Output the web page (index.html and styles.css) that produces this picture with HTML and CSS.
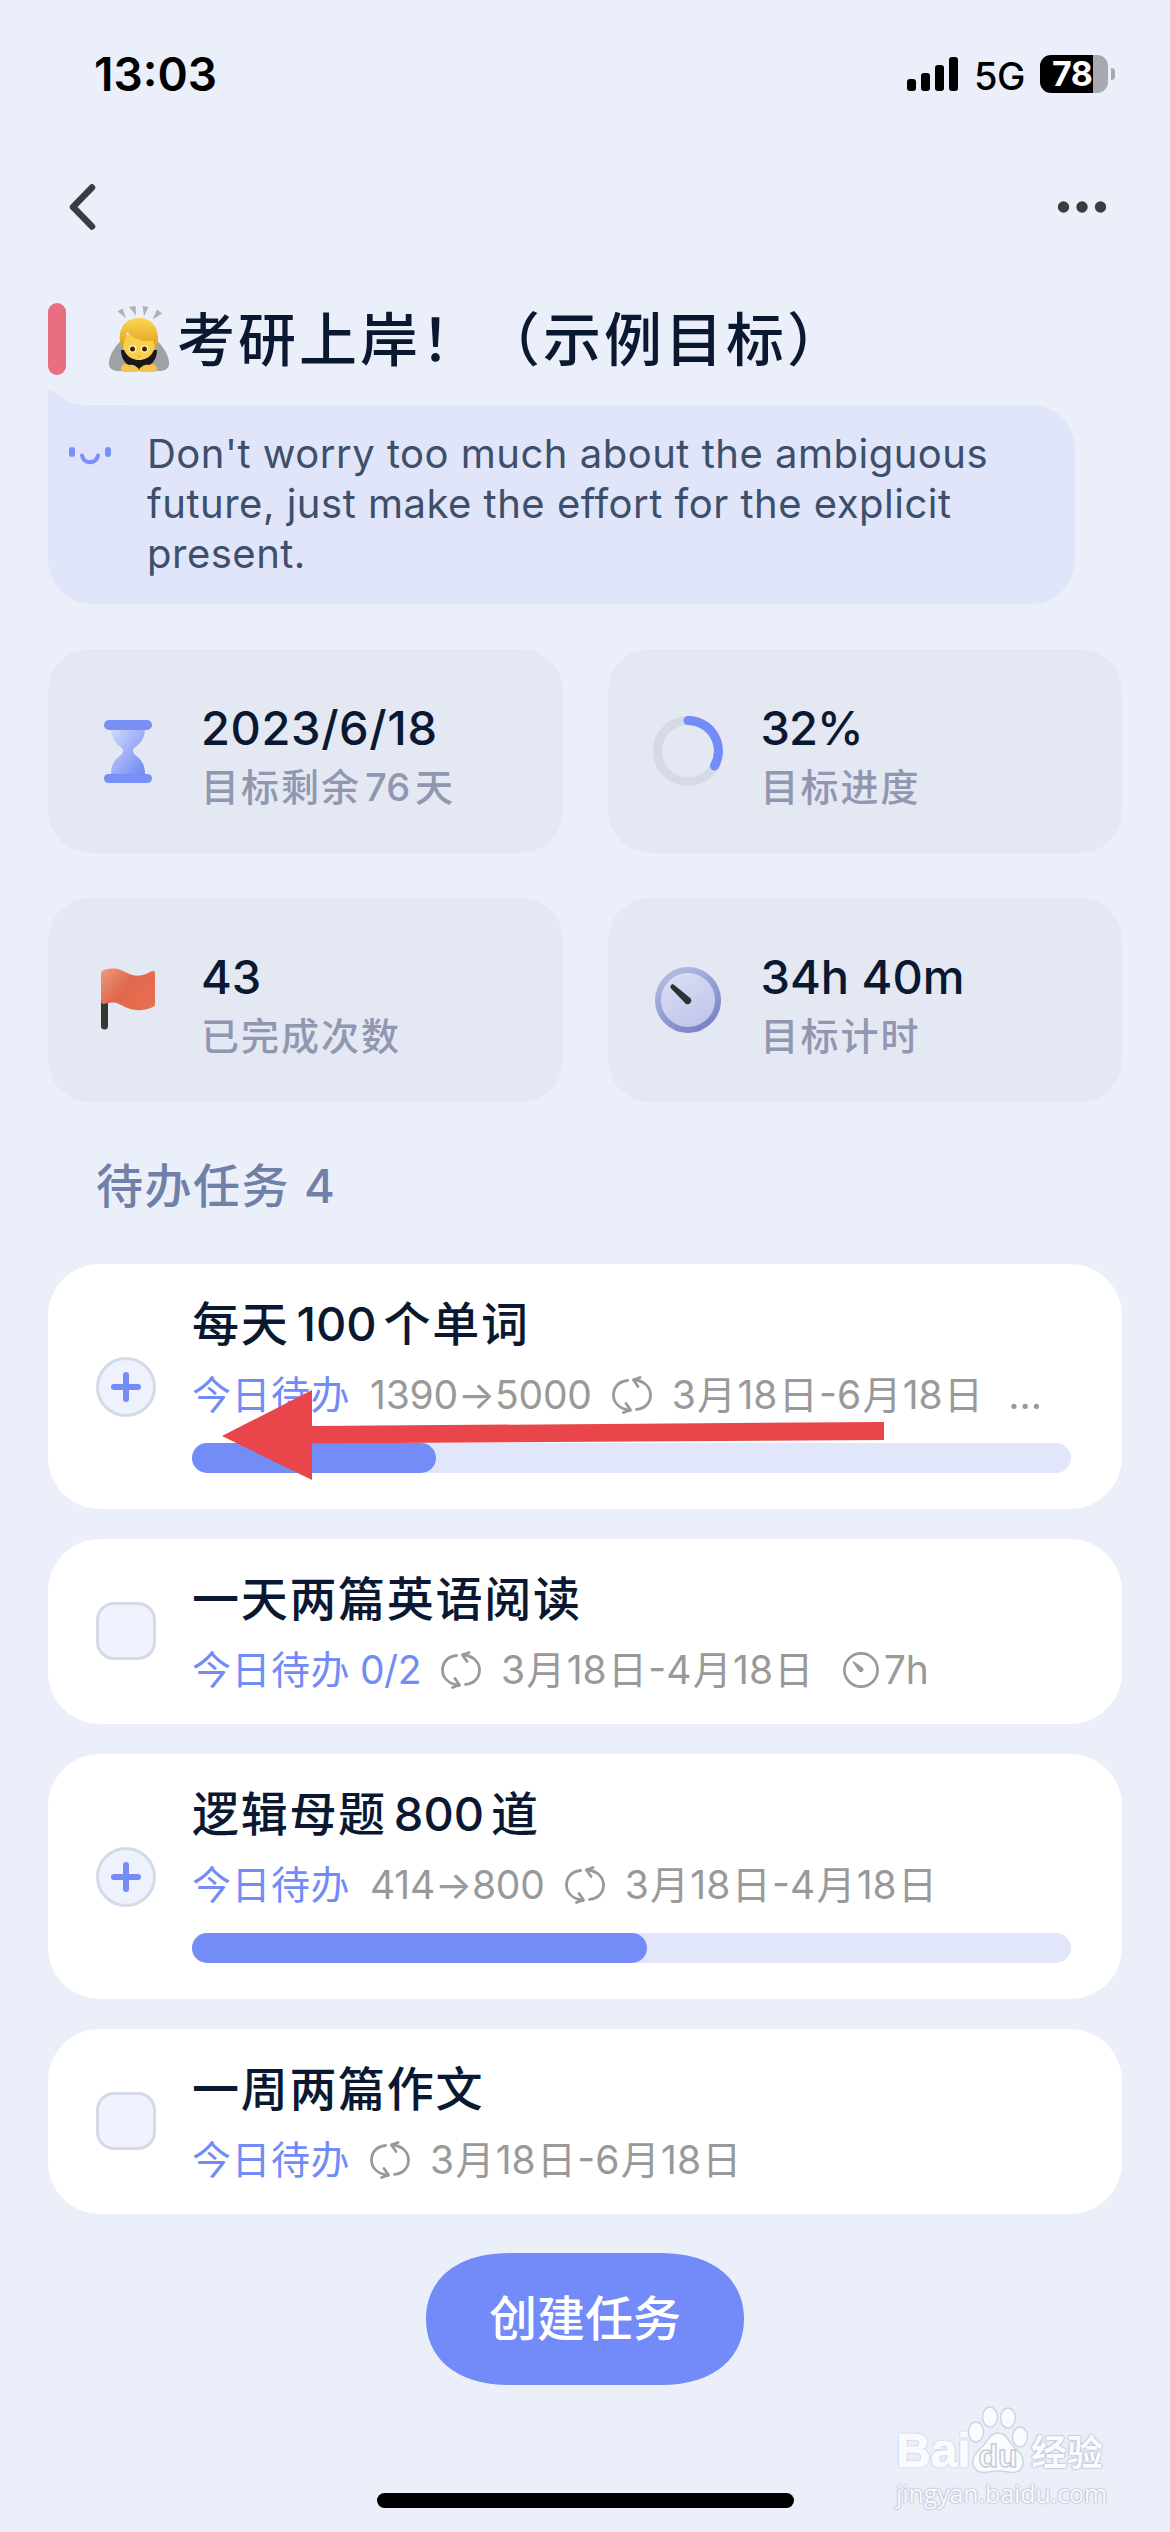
FILE: index.html
```html
<!DOCTYPE html>
<html lang="zh-CN">
<head>
<meta charset="utf-8">
<title>考研上岸</title>
<link rel="stylesheet" href="styles.css">
</head>
<body>
<svg width="0" height="0" class="defs">
  <defs>
    <linearGradient id="glass" x1="0" y1="0" x2="1" y2="1"><stop offset="0" stop-color="#d3dbfb"/><stop offset="1" stop-color="#6d87f5"/></linearGradient>
    <linearGradient id="flag" x1="0" y1="0" x2="1" y2=".7"><stop offset="0" stop-color="#ee9a7e"/><stop offset=".5" stop-color="#df694d"/><stop offset="1" stop-color="#e96d50"/></linearGradient>
    <linearGradient id="rim" x1=".2" y1="0" x2=".8" y2="1"><stop offset="0" stop-color="#b3bce2"/><stop offset="1" stop-color="#7881c2"/></linearGradient>
    <linearGradient id="face" x1=".2" y1="0" x2=".8" y2="1"><stop offset="0" stop-color="#dcdff5"/><stop offset="1" stop-color="#bec2e9"/></linearGradient>
    <linearGradient id="hair" x1="0" y1="0" x2="0" y2="1"><stop offset="0" stop-color="#fbd64e"/><stop offset="1" stop-color="#e0a021"/></linearGradient>
    <symbol id="repeat" viewBox="0 0 40 38"><g fill="none" stroke="#999" stroke-width="2.8" stroke-linecap="round" stroke-linejoin="round"><path d="M15.500 4.500C6 5.500 1.500 12 1.500 19c0 7 5 13.500 16.500 15.500M11.500 36.500l7-2.500-4.500-6.500"/><path d="M24.500 33.300C34 32.500 38.500 26 38.500 19c0-7-5-13.500-16.500-15.500M28 1.500l-6.500 2.500 4.500 6.500"/></g></symbol>
  </defs>
</svg>
<div class="screen">
  <header class="status">
    <span class="time">13:03</span>
    <div class="status-right">
      <svg class="signal" width="51" height="34" viewBox="0 0 51 34"><rect y="22" width="9" height="12" rx="3"/><rect x="14" y="16" width="9" height="18" rx="3"/><rect x="28" y="8" width="9" height="26" rx="3"/><rect x="42" width="9" height="34" rx="3"/></svg>
      <span class="net">5G</span>
      <div class="battery"><span>78</span></div>
      <i class="nub"></i>
    </div>
  </header>
  <nav class="nav">
    <svg width="30" height="48" viewBox="0 0 30 48"><path d="M25 4.500 6 24l19 19.500" fill="none" stroke="#3c3c3e" stroke-width="6.500" stroke-linecap="round" stroke-linejoin="round"/></svg>
    <svg width="50" height="12" viewBox="0 0 50 12" fill="#3c3c3e"><circle cx="6.500" cy="6" r="5.700"/><circle cx="25" cy="6" r="5.700"/><circle cx="43.500" cy="6" r="5.700"/></svg>
  </nav>
  <div class="title">
    <i class="mark"></i>
    <svg class="bow" width="62" height="68" viewBox="0 0 62 68">
      <g fill="#b0b0b2"><path d="M9.500 6.500l5-3 3.500 9.500zM21 2l6.500-1 .5 9.500zM34.500 1l6 1-4.500 9zM49 4.500l5 4-9.500 6z"/></g>
      <path d="M13 36C6 42 2 50 1 57c-1 7 5 9.500 12 9h36c7 .5 13-2 12-9-1-7-5-15-12-21z" fill="#a0a1a6"/>
      <path d="M13 45c0 9 5 17 18 20 13-3 18-11 18-20z" fill="#18181b"/>
      <path d="M14 30c-1 16 6 25 17 25s18-9 17-25z" fill="#fbcf4d"/>
      <path d="M12 36C10 22 19 13 31 13s20 9 19 23c0 4-1 6-3 7-1-3-1-5-2-7-11 1-21-3-26-9-1 6-2 8-3 11 0 2 0 3-1 4-2-1-3-3-3-6z" fill="url(#hair)"/>
      <circle cx="24.500" cy="44" r="3.800" fill="#fff3c4"/><circle cx="36.500" cy="44" r="3.800" fill="#fff3c4"/><circle cx="24.500" cy="44" r="2.500" fill="#3d2508"/><circle cx="36.500" cy="44" r="2.500" fill="#3d2508"/>
      <path d="M29.500 50.500h3l-1.500 2z" fill="#df9d26"/>
      <path d="M13 63c1-4 5-5 8-3 3-1 6 0 9 3 2 3 0 4-3 4H16c-2 0-3-2-3-4zM49 63c-1-4-5-5-8-3-3-1-6 0-9 3-2 3 0 4 3 4h11c2 0 3-2 3-4z" fill="#f5c24a"/>
    </svg>
    <h1>考研上岸！（示例目标）</h1>
  </div>
  <div class="bubble">
    <svg class="tail" width="40" height="40" viewBox="0 0 40 40"><path d="M0 40V3Q1-1 5 2L19 12Q26 16 34 16V40z" fill="#e1e5f9"/></svg>
    <div class="smile"><svg width="42" height="18" viewBox="0 0 42 18"><rect width="6" height="10" rx="3" fill="#7c90f5"/><rect x="36" width="6" height="10" rx="3" fill="#7c90f5"/><path d="M13 8.500c2 9 14 9 16 0" fill="none" stroke="#7c90f5" stroke-width="4" stroke-linecap="round"/></svg></div>
    <p>Don't worry too much about the ambiguous<br>future, just make the effort for the explicit<br>present.</p>
  </div>
  <section class="stats">
    <div class="stat"><svg width="70" height="70" viewBox="0 0 70 70"><path d="M18 12h34c0 12-6 16-11 20q-2 3 0 6c5 4 11 8 11 20H18c0-12 6-16 11-20q2-3 0-6c-5-4-11-8-11-20z" fill="url(#glass)"/><rect x="11" y="4" width="48" height="10" rx="5" fill="#788ff6"/><rect x="11" y="58" width="48" height="9" rx="4.500" fill="#788ff6"/></svg><div><b class="date">2023/6/18</b><small>目标剩余<em>76</em>天</small></div></div>
    <div class="stat"><svg width="70" height="70" viewBox="0 0 70 70"><circle cx="35" cy="35" r="30.500" fill="none" stroke="#d6dae5" stroke-width="9"/><path d="M35 4.500A30.500 30.500 0 0 1 61.500 50" fill="none" stroke="#738cf7" stroke-width="9" stroke-linecap="round"/></svg><div><b class="percent">32%</b><small>目标进度</small></div></div>
    <div class="stat"><svg width="70" height="70" viewBox="0 0 70 70"><path d="M11.500 36v25" stroke="#363634" stroke-width="7" stroke-linecap="round"/><path d="M8 8Q8 6 11 5C32-1 32 14 50 10c5-1 7-4 10-4q2 0 2 2v31q0 2-2 3c-16 7-26 1-34-3-5-3-11-1-15 0q-3 0-3-3z" fill="url(#flag)"/></svg><div><b>43</b><small>已完成次数</small></div></div>
    <div class="stat"><svg width="70" height="70" viewBox="0 0 70 70"><circle cx="35" cy="35" r="30" fill="url(#face)" stroke="url(#rim)" stroke-width="6"/><path d="M21.500 20.200 37.500 33.200A3.800 3.800 0 0 1 33 39L18 23.500A2.300 2.300 0 0 1 21.500 20.200z" fill="#293234"/></svg><div><b>34h 40m</b><small>目标计时</small></div></div>
  </section>
  <h2>待办任务 <em>4</em></h2>
  <section class="tasks">
    <article class="task tall">
      <svg class="check" width="60" height="60" viewBox="0 0 60 60"><circle cx="30" cy="30" r="28.500" fill="#eef2fd" stroke="#d5dae8" stroke-width="3"/><path d="M30 18v24M18 30h24" stroke="#738cf7" stroke-width="6" stroke-linecap="round"/></svg>
      <div class="body">
        <h3>每天<em>100</em>个单词</h3>
        <div class="meta"><span class="today">今日待办</span><span class="num">1390→5000</span><svg class="rep"><use href="#repeat"/></svg><span class="range">3<u>月</u>18<u>日</u>-6<u>月</u>18<u>日</u></span><span class="more">...</span></div>
        <div class="bar"><i style="width:27.8%"></i></div>
      </div>
      <svg class="arrow" width="664" height="92" viewBox="0 0 664 92"><path d="M0 47 90 1V37L662 33V51L90 54.500V91z" fill="#e9464b"/></svg>
    </article>
    <article class="task">
      <i class="box"></i>
      <div class="body">
        <h3>一天两篇英语阅读</h3>
        <div class="meta"><span class="today">今日待办<em>0/2</em></span><svg class="rep"><use href="#repeat"/></svg><span class="range">3<u>月</u>18<u>日</u>-4<u>月</u>18<u>日</u></span><svg class="clock" width="36" height="36" viewBox="0 0 36 36"><circle cx="18" cy="18" r="16.600" fill="none" stroke="#999" stroke-width="2.600"/><path d="M10.500 9 19.500 15.500A2.600 2.600 0 0 1 16 19.500L9.500 10z" fill="#999"/></svg><span class="hours">7h</span></div>
      </div>
    </article>
    <article class="task tall">
      <svg class="check" width="60" height="60" viewBox="0 0 60 60"><circle cx="30" cy="30" r="28.500" fill="#eef2fd" stroke="#d5dae8" stroke-width="3"/><path d="M30 18v24M18 30h24" stroke="#738cf7" stroke-width="6" stroke-linecap="round"/></svg>
      <div class="body">
        <h3>逻辑母题<em>800</em>道</h3>
        <div class="meta"><span class="today">今日待办</span><span class="num">414→800</span><svg class="rep"><use href="#repeat"/></svg><span class="range">3<u>月</u>18<u>日</u>-4<u>月</u>18<u>日</u></span></div>
        <div class="bar"><i style="width:51.75%"></i></div>
      </div>
    </article>
    <article class="task">
      <i class="box"></i>
      <div class="body">
        <h3>一周两篇作文</h3>
        <div class="meta"><span class="today">今日待办</span><svg class="rep"><use href="#repeat"/></svg><span class="range">3<u>月</u>18<u>日</u>-6<u>月</u>18<u>日</u></span></div>
      </div>
    </article>
  </section>
  <button class="create"><svg viewBox="0 0 318 132" width="318" height="132"><path d="M84 0H234C292 0 318 30 318 66S292 132 234 132H84C26 132 0 102 0 66S26 0 84 0z" fill="#728bf8"/></svg><span>创建任务</span></button>
  <div class="home"></div>
  <div class="watermark">
    <div class="logo"><span class="bai">Bai</span><svg width="64" height="70" viewBox="0 0 64 70"><g fill="#fafbfe" stroke="#d0d4df" stroke-width="1.500"><ellipse cx="9" cy="26" rx="7.500" ry="10"/><ellipse cx="23" cy="11" rx="7.500" ry="10"/><ellipse cx="41" cy="12" rx="7.500" ry="10"/><ellipse cx="53" cy="31" rx="7.500" ry="10"/><path d="M31 27c9 0 10 9 17 15 6 5 9 10 8 16-2 9-10 9-15 8q-10-2-20 0c-5 1-13 1-15-8-1-6 2-11 8-16 7-6 8-15 17-15z"/></g><text x="31" y="61" text-anchor="middle" class="du">du</text></svg><span class="jy">经验</span></div>
    <div class="url">jingyan.baidu.com</div>
  </div>
</div>
</body>
</html>
```
FILE: styles.css
```css
* { box-sizing: border-box; margin: 0; padding: 0; }
body { background: #ebeffa; font-family: Inter, "Noto Sans CJK SC", sans-serif; color: #0a1831; }
em, i { font-style: normal; }
u { text-decoration: none; margin: 0 1.300px; }
svg { display: block; flex: none; }
.defs { position: absolute; }
.screen { position: relative; width: 1170px; height: 2532px; overflow: hidden; display: flex; flex-direction: column; padding: 0 48px; }
.status { height: 148px; flex: none; display: flex; align-items: center; justify-content: space-between; padding: 0 7px 0 46px; color: #000; }
.time { font-size: 46px; font-weight: 600; }
.status-right { display: flex; align-items: center; }
.net { font-size: 38px; margin-left: 16px; width: 66px; font-weight: 500; line-height: 40px; padding-top: 3px; letter-spacing: -.5px; }
.battery { width: 68px; height: 38px; border-radius: 11px; background: linear-gradient(90deg, #000 53px, #a6a9b2 53px); color: #fff; font-size: 34px; font-weight: 700; line-height: 38px; padding-left: 12px; letter-spacing: -.5px; }
.nub { width: 4px; height: 12px; border-radius: 0 4px 4px 0; background: #a6a9b2; margin-left: 3px; }
.nav { height: 117px; flex: none; display: flex; align-items: center; justify-content: space-between; padding: 0 15px 0 19px; }
.title { height: 140px; flex: none; display: flex; align-items: center; padding-top: 8px; }
.mark { width: 18px; height: 72px; border-radius: 9px; background: #e86e80; }
.bow { margin-left: 42px; }
h1 { margin: 2px 0 0 7px; font-size: 58px; font-weight: 500; letter-spacing: 3px; line-height: 80px; white-space: nowrap; }
.bubble { position: relative; flex: none; width: 1027px; height: 199px; background: #e1e5f9; border-radius: 0 44px 44px 44px; display: flex; }
.tail { position: absolute; left: 0; top: -16px; }
.smile { position: relative; width: 78px; height: 61px; margin-left: 6px; padding: 42px 0 0 15px; background: #dfe3fc; border-radius: 24px 0 0 0; }
.bubble p { margin-left: 15px; padding-top: 24px; font-size: 40px; line-height: 50px; letter-spacing: .5px; color: #3d4f6b; white-space: nowrap; }
.stats { flex: none; margin-top: 45px; display: grid; grid-template-columns: 1fr 1fr; gap: 45px; }
.stat { height: 204px; border-radius: 42px; background: #e4e8f3; display: flex; align-items: center; padding-left: 45px; }
.stat > div { margin-left: 38px; height: 120px; display: flex; flex-direction: column; white-space: nowrap; }
.stat b { font-size: 47px; font-weight: 500; line-height: 70px; margin-top: 2px; }
.stat .date { letter-spacing: .6px; }
.stat .percent { letter-spacing: -1px; }
.stat small { font-size: 38px; line-height: 48px; color: #9197b0; letter-spacing: 2px; font-weight: 500; }
.stat em { margin: 0 5px 0 4px; letter-spacing: 0; }
h2 { flex: none; height: 162px; padding: 49px 0 0 48px; font-size: 47px; font-weight: 500; line-height: 70px; letter-spacing: 1.500px; color: #7080a8; }
.tasks { flex: none; display: flex; flex-direction: column; gap: 30px; }
.task { position: relative; height: 185px; border-radius: 52px; background: #fff; display: flex; align-items: center; padding: 0 51px 0 48px; }
.tall { height: 245px; }
.body { align-self: flex-start; margin-left: 36px; flex: 1; min-width: 0; }
.box { width: 60px; height: 58px; margin-bottom: 2px; border: 3px solid #d5dae8; border-radius: 18px; background: #f0f3fe; }
h3 { margin-top: 25px; font-size: 47px; line-height: 70px; font-weight: 500; letter-spacing: 1.700px; white-space: nowrap; }
h3 em { margin: 0 7px; letter-spacing: 0; }
.meta { height: 50px; margin-top: 11px; display: flex; align-items: center; font-size: 39px; line-height: 50px; color: #999; white-space: nowrap; }
.today { color: #728bf6; letter-spacing: .5px; }
.today em { margin-left: 10px; letter-spacing: -.5px; }
.num { margin-left: 20px; letter-spacing: -.2px; }
.rep { width: 40px; height: 38px; margin: 0 20px; }
.more { margin-left: 24px; }
.clock { margin-left: 28px; }
.hours { margin-left: 5px; }
.bar { margin-top: 23px; height: 30px; border-radius: 15px; background: #e2e6fb; }
.bar i { display: block; height: 30px; border-radius: 15px; background: #738cf8; }
.arrow { position: absolute; left: 174px; top: 125px; }
.create { position: relative; flex: none; align-self: center; margin-top: 39px; width: 318px; height: 132px; border: 0; background: none; font: 500 48px/132px Inter, "Noto Sans CJK SC", sans-serif; color: #fff; }
.create span { position: absolute; inset: 0; }
.home { position: absolute; left: 377px; top: 2493px; width: 417px; height: 15px; border-radius: 8px; background: #000; }
.watermark { position: absolute; left: 896px; top: 2406px; width: 212px; color: #fafbfe; text-shadow: 0 0 2px #a9b0c0, 0 0 2px #a9b0c0; }
.logo { display: flex; height: 70px; }
.bai { font: 700 48px/56px "Liberation Sans", sans-serif; padding-top: 17px; width: 71px; -webkit-text-stroke: 1px #fafbfe; }
.du { font: 700 32px "Liberation Sans", sans-serif; fill: #fafbfe; stroke: #c6cbd8; stroke-width: 1.500px; text-shadow: none; }
.jy { font-size: 36px; font-weight: 700; line-height: 50px; padding-top: 22px; }
.url { font: 25px/34px "Open Sans", sans-serif; letter-spacing: -.1px; }
```
